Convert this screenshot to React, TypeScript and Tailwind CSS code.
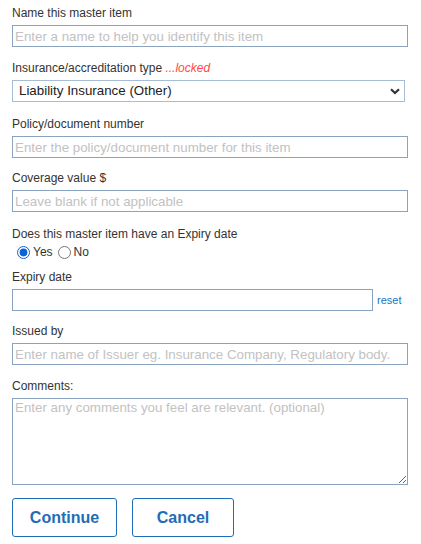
import React, { useState } from 'react';

const font = { fontFamily: '"Liberation Sans", Arial, sans-serif' };

const Label: React.FC<{ children: React.ReactNode; className?: string }> = ({ children, className = '' }) => (
  <label className={`block text-[12px] leading-[15px] text-[#333333] ${className}`}>{children}</label>
);

const inputCls =
  'block h-[22px] w-[396px] border border-[#8aa3bf] bg-white px-[2px] text-[13.333px] text-[#333] outline-none placeholder:text-[#c2c2c2]';

const App: React.FC = () => {
  const [hasExpiry, setHasExpiry] = useState('yes');

  return (
    <div className="min-h-[544px] bg-white pl-[12px] pt-[6px]" style={font}>
      <Label>Name this master item</Label>
      <input className={`${inputCls} mt-[4px]`} placeholder="Enter a name to help you identify this item" />

      <Label className="mt-[14px]">
        Insurance/accreditation type <span className="italic text-[#ff4a4a]">...locked</span>
      </Label>
      <div className="relative mt-[4px] w-[393px]">
        <select
          className="block h-[22px] w-full appearance-none border border-[#a6bdd5] bg-white pl-[6px] text-[13.333px] text-[#222] outline-none"
          defaultValue="liab"
        >
          <option value="liab">Liability Insurance (Other)</option>
        </select>
        <svg className="pointer-events-none absolute right-[5px] top-[8px]" width="10" height="7" viewBox="0 0 10 7">
          <path d="M1 1.2 L5 5 L9 1.2" fill="none" stroke="#333" strokeWidth="2.2" />
        </svg>
      </div>

      <Label className="mt-[15px]">Policy/document number</Label>
      <input className={`${inputCls} mt-[4px]`} placeholder="Enter the policy/document number for this item" />

      <Label className="mt-[13px]">Coverage value $</Label>
      <input className={`${inputCls} mt-[4px]`} placeholder="Leave blank if not applicable" />

      <Label className="mt-[15px]">Does this master item have an Expiry date</Label>
      <div className="mt-[2px] flex items-center text-[12px] leading-[16px] text-[#333]">
        <input
          type="radio"
          name="expiry"
          className="ml-[5px] mr-[3px] h-[13px] w-[13px] accent-[#0b62d6]"
          checked={hasExpiry === 'yes'}
          onChange={() => setHasExpiry('yes')}
        />
        <span>Yes</span>
        <input
          type="radio"
          name="expiry"
          className="ml-[5px] mr-[3px] h-[13px] w-[13px] accent-[#0b62d6]"
          checked={hasExpiry === 'no'}
          onChange={() => setHasExpiry('no')}
        />
        <span>No</span>
      </div>

      <Label className="mt-[10px]">Expiry date</Label>
      <div className="mt-[4px] flex items-center">
        <input className="block h-[22px] w-[361px] border border-[#8aa3bf] bg-white px-[2px] text-[13.333px] outline-none" />
        <a href="#" className="ml-[4px] text-[11px] text-[#1a74c9]">
          reset
        </a>
      </div>

      <Label className="mt-[13px]">Issued by</Label>
      <input
        className={`${inputCls} mt-[4px]`}
        placeholder="Enter name of Issuer eg. Insurance Company, Regulatory body."
      />

      <Label className="mt-[14px]">Comments:</Label>
      <textarea
        className="mt-[4px] block h-[87px] w-[396px] border border-[#8aa3bf] bg-white px-[2px] py-[1px] text-[13.333px] leading-[16px] outline-none placeholder:text-[#c2c2c2]"
        style={font}
        placeholder="Enter any comments you feel are relevant. (optional)"
      />

      <div className="mt-[13px] flex gap-[15px]">
        <button className="h-[39px] w-[105px] rounded-[3px] border border-[#1f6db5] bg-white text-[16px] font-bold text-[#1f6db5]">
          Continue
        </button>
        <button className="h-[39px] w-[102px] rounded-[3px] border border-[#1f6db5] bg-white text-[16px] font-bold text-[#1f6db5]">
          Cancel
        </button>
      </div>
    </div>
  );
};

export default App;
